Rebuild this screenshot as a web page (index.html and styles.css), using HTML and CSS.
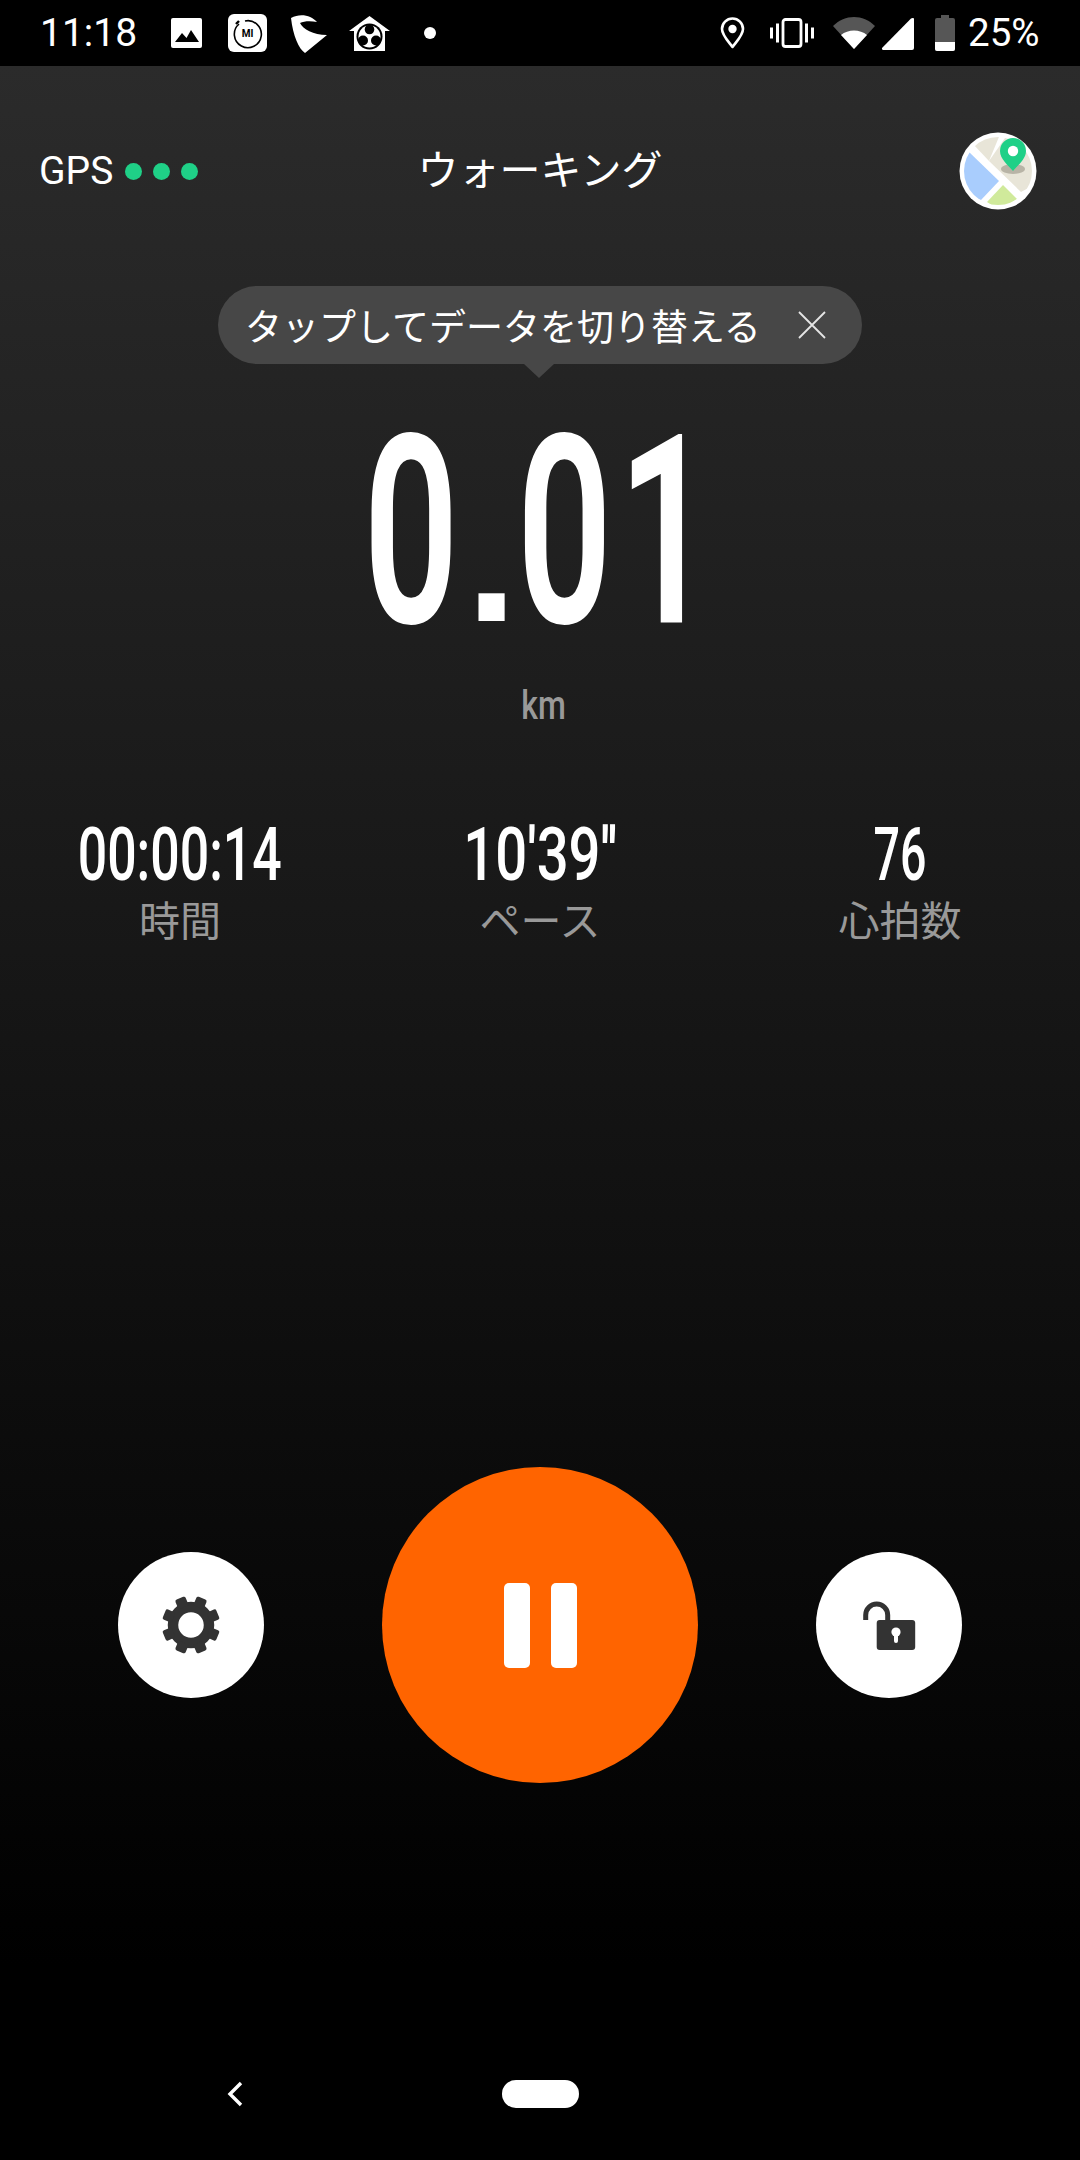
FILE: index.html
```html
<!DOCTYPE html>
<html lang="ja">
<head>
<meta charset="utf-8">
<title>ウォーキング</title>
<link rel="stylesheet" href="styles.css">
</head>
<body>
<div class="page">
  <div class="status">
    <div class="status-left">
      <span class="clock">11:18</span>
      <svg class="i-image" viewBox="0 0 31 30"><rect width="31" height="30" rx="2" fill="#fff"/><path d="M4 24 L11 15 L15.5 20 L20 12 L28 24 Z" fill="#000"/></svg>
      <svg class="i-mi" viewBox="0 0 39 38"><rect width="39" height="38" rx="6" fill="#fff"/><path d="M11 10 A13.5 13.5 0 1 0 17 7" fill="none" stroke="#000" stroke-width="1.6"/><path d="M8 10 L11 7" stroke="#000" stroke-width="2.4"/><text x="19.5" y="23" class="mi-text">MI</text></svg>
      <svg class="i-gs" viewBox="0 0 36 39"><path d="M0 4 C9 -1 20 1 26 8 C20 7 13 7 9 9 C12 15 22 21 36 21 L14 39 C8 35 2 22 0 4Z" fill="#fff"/></svg>
      <svg class="i-home" viewBox="0 0 41 35"><path d="M20.5 0 L41 15 L36 15 L36 35 L5 35 L5 15 L0 15Z" fill="#fff"/><circle cx="20.5" cy="20.5" r="13" fill="#000"/><circle cx="20.5" cy="20.5" r="11" fill="#fff"/><circle cx="20.5" cy="13.5" r="4.8" fill="#000"/><circle cx="14" cy="24.5" r="5" fill="#000"/><circle cx="27" cy="24.5" r="5" fill="#000"/></svg>
      <span class="dot"></span>
    </div>
    <div class="status-right">
      <svg class="i-loc" viewBox="0 0 25 32"><path d="M12.5 30 C8 24 2 18 2 12 A10.5 10.5 0 0 1 23 12 C23 18 17 24 12.5 30Z" fill="none" stroke="#fff" stroke-width="2.6" stroke-linejoin="round"/><circle cx="12.5" cy="12" r="4.2" fill="#fff"/></svg>
      <svg class="i-vib" viewBox="0 0 44 30"><rect x="13" y="1.5" width="18" height="27" rx="2.5" fill="none" stroke="#fff" stroke-width="2.8"/><path d="M1.5 9.5 V20.5 M7.5 5.5 V24.5 M36.5 5.5 V24.5 M42.5 9.5 V20.5" stroke="#fff" stroke-width="3"/></svg>
      <svg class="i-wifi" viewBox="0 0 42 32"><path d="M0 9 C12 -3 30 -3 42 9 L21 32Z" fill="#565656"/><path d="M8 18 C15 12 27 12 34 18 L21 32Z" fill="#fff"/></svg>
      <svg class="i-sig" viewBox="0 0 33 33"><path d="M33 2 V31 A2 2 0 0 1 31 33 H2 A1.5 1.5 0 0 1 1 31 L30 1.5 C31 0.6 33 0.6 33 2Z" fill="#fff"/></svg>
      <svg class="i-bat" viewBox="0 0 20 36"><path d="M6 0 H14 V3 H18 A2 2 0 0 1 20 5 V34 A2 2 0 0 1 18 36 H2 A2 2 0 0 1 0 34 V5 A2 2 0 0 1 2 3 H6Z" fill="#565656"/><path d="M0 27 H20 V34 A2 2 0 0 1 18 36 H2 A2 2 0 0 1 0 34Z" fill="#fff"/></svg>
      <span class="pct">25%</span>
    </div>
  </div>

  <main class="main">
    <header class="head">
      <div class="gps"><span>GPS</span><i></i><i></i><i></i></div>
      <div class="title">ウォーキング</div>
      <svg class="map" viewBox="0 0 78 78">
        <defs><clipPath id="mapclip"><circle cx="39" cy="39" r="34"/></clipPath></defs>
        <circle cx="39" cy="39" r="38.5" fill="#fff"/>
        <g clip-path="url(#mapclip)">
          <path d="M14 10 L42 -2 L30 27Z" fill="#e8e5d8" transform="translate(0 2)"/>
          <path d="M46 6 L80 10 L80 50 L62 60 L30 29Z" fill="#e8e5d8"/>
          <path d="M10 20 L40 49 L22 68 L0 60 L0 20Z" fill="#a9cdfd"/>
          <path d="M44 53 L58 67 L40 78 L28 70Z" fill="#d0ea9b"/>
        </g>
        <ellipse cx="54" cy="37" rx="12" ry="5" fill="#b8b4a6"/>
        <path d="M54 39 C49 33 41 27 41 19 A13 13 0 0 1 67 19 C67 27 59 33 54 39Z" fill="#1fd087"/>
        <circle cx="54" cy="19" r="5.2" fill="#fff"/>
      </svg>
    </header>

    <div class="tip-wrap">
      <div class="tip">
        <span class="tip-text">タップしてデータを切り替える</span>
        <svg class="tip-x" viewBox="0 0 28 28"><path d="M1 1 L27 27 M27 1 L1 27" stroke="#e6e6e6" stroke-width="1.8"/></svg>
      </div>
    </div>

    <div class="big"><span class="big-num">0<span class="big-dot">.</span>01</span></div>
    <div class="unit"><span class="unit-t">km</span></div>

    <section class="stats">
      <div class="stat"><span class="val v-time">00:00:14</span><span class="lab">時間</span></div>
      <div class="stat"><span class="val v-pace">10'39''</span><span class="lab">ペース</span></div>
      <div class="stat"><span class="val v-hr">76</span><span class="lab">心拍数</span></div>
    </section>

    <section class="controls">
      <button class="btn-s">
        <svg class="gear" viewBox="-30 -30 60 60">
          <circle r="18" fill="none" stroke="#333" stroke-width="10.5"/>
          <rect x="-5.5" y="-29" width="11" height="10" rx="2" fill="#333" transform="rotate(22.5)"/>
          <rect x="-5.5" y="-29" width="11" height="10" rx="2" fill="#333" transform="rotate(67.5)"/>
          <rect x="-5.5" y="-29" width="11" height="10" rx="2" fill="#333" transform="rotate(112.5)"/>
          <rect x="-5.5" y="-29" width="11" height="10" rx="2" fill="#333" transform="rotate(157.5)"/>
          <rect x="-5.5" y="-29" width="11" height="10" rx="2" fill="#333" transform="rotate(202.5)"/>
          <rect x="-5.5" y="-29" width="11" height="10" rx="2" fill="#333" transform="rotate(247.5)"/>
          <rect x="-5.5" y="-29" width="11" height="10" rx="2" fill="#333" transform="rotate(292.5)"/>
          <rect x="-5.5" y="-29" width="11" height="10" rx="2" fill="#333" transform="rotate(337.5)"/>
        </svg>
      </button>
      <button class="btn-p"><i></i><i></i></button>
      <button class="btn-s">
        <svg class="lock" viewBox="-30 -30 60 60">
          <path d="M-23.3 -5 V-10 a11 11 0 0 1 22 0 V-5" fill="none" stroke="#333" stroke-width="5"/>
          <rect x="-12.3" y="-5" width="38.5" height="30" rx="3" fill="#333"/>
          <circle cx="7" cy="7" r="4.6" fill="#fff"/>
          <rect x="5" y="7" width="4" height="11" rx="2" fill="#fff"/>
        </svg>
      </button>
    </section>

    <nav class="nav">
      <svg class="back" viewBox="0 0 18 28"><path d="M15 3 L4 14 L15 25" fill="none" stroke="#fff" stroke-width="3.4"/></svg>
      <span class="pill"></span>
    </nav>
  </main>
</div>
</body>
</html>
```

FILE: styles.css
```css
* { box-sizing: border-box; }
html, body { margin: 0; padding: 0; background: #000; }
.page {
  width: 1080px;
  height: 2160px;
  overflow: hidden;
  color: #fff;
  font-family: Roboto, "Noto Sans CJK JP", sans-serif;
}
.status {
  height: 66px;
  background: #000;
  display: flex;
  justify-content: space-between;
  align-items: center;
  padding: 0 40px 0 40px;
}
.status-left, .status-right { display: flex; align-items: center; }
.clock { font-size: 39px; width: 96px; white-space: nowrap; line-height: 66px; }
.i-image { width: 31px; height: 30px; margin-left: 35px; }
.i-mi { width: 39px; height: 38px; margin-left: 26px; }
.i-gs { width: 36px; height: 39px; margin-left: 24px; }
.i-home { width: 41px; height: 35px; margin-left: 22px; }
.dot { width: 12px; height: 12px; border-radius: 50%; background: #fff; margin-left: 34px; }
.mi-text { font: 700 10px Roboto, sans-serif; text-anchor: middle; fill: #000; }
.i-loc { width: 25px; height: 32px; }
.i-vib { width: 44px; height: 30px; margin-left: 25px; }
.i-wifi { width: 42px; height: 32px; margin-left: 19px; }
.i-sig { width: 33px; height: 33px; margin-left: 6px; }
.i-bat { width: 20px; height: 36px; margin-left: 21px; }
.pct { font-size: 38.5px; margin-left: 13px; width: 72px; white-space: nowrap; line-height: 66px; }

.main {
  height: 2094px;
  background: linear-gradient(180deg, #2b2b2b 0, #000 1900px);
  display: flex;
  flex-direction: column;
}
.head {
  display: flex;
  align-items: center;
  justify-content: space-between;
  height: 78px;
  margin-top: 66px;
  padding: 0 43px 0 39px;
  position: relative;
}
.gps { display: flex; align-items: center; font-size: 39px; }
.gps i { width: 17px; height: 17px; border-radius: 50%; background: #1fd087; margin-left: 11px; }
.gps span { margin-right: 1px; }
.title { font-size: 41px; line-height: 78px; position: absolute; left: 0; right: 0; text-align: center; }
.map { width: 78px; height: 78px; position: relative; }

.tip-wrap { display: flex; justify-content: center; margin-top: 76px; }
.tip {
  position: relative;
  width: 644px;
  height: 78px;
  border-radius: 39px;
  background: #474747;
  display: flex;
  align-items: center;
  justify-content: space-between;
  padding: 0 36px 0 27px;
}
.tip::after {
  content: "";
  position: absolute;
  left: 306px;
  top: 78px;
  width: 0;
  height: 0;
  border-left: 15.5px solid transparent;
  border-right: 15.5px solid transparent;
  border-top: 14px solid #474747;
}
.tip-text { font-size: 37px; white-space: nowrap; }
.tip-x { width: 28px; height: 28px; }

.big { height: 270px; margin-top: 33px; padding-left: 5px; display: flex; justify-content: center; align-items: center; }
.big-num {
  display: inline-block;
  font-family: Roboto, sans-serif;
  font-weight: 500;
  font-size: 260px;
  line-height: 270px;
  letter-spacing: 12px;
  white-space: nowrap;
  -webkit-text-stroke: 3px #fff;
  transform: scaleX(0.636);
}
.big-dot {
  display: inline-block;
  font-family: "Liberation Sans", sans-serif;
  font-weight: 700;
  font-size: 185px;
  letter-spacing: 0;
  line-height: 100px;
  margin: 0 15px;
  -webkit-text-stroke: 0;
  transform: scaleX(1.57);
}
.unit { display: flex; justify-content: center; height: 50px; margin-top: 13px; padding-left: 8px; }
.unit-t { display: inline-block; font-size: 41px; font-weight: 500; line-height: 50px; color: #999; transform: scaleX(0.78); }

.stats { display: grid; grid-template-columns: repeat(3, 1fr); margin-top: 88px; }
.stat { display: flex; flex-direction: column; align-items: center; }
.val {
  display: inline-block;
  font-weight: 500;
  font-size: 74px;
  line-height: 74px;
  white-space: nowrap;
}
.v-time { transform: scaleX(0.7); }
.v-pace { transform: scaleX(0.76); }
.v-hr { transform: scaleX(0.63); }
.lab { font-size: 41px; line-height: 58px; color: #999; margin-top: 1px; }

.controls {
  display: flex;
  align-items: center;
  justify-content: center;
  height: 316px;
  margin-top: 516px;
}
.btn-s {
  width: 146px;
  height: 146px;
  border: 0;
  padding: 0;
  border-radius: 50%;
  background: #fff;
  display: flex;
  align-items: center;
  justify-content: center;
}
.gear, .lock { width: 60px; height: 60px; }
.btn-p {
  width: 316px;
  height: 316px;
  margin: 0 118px 0 118px;
  border: 0;
  padding: 0;
  border-radius: 50%;
  background: #ff6400;
  display: flex;
  align-items: center;
  justify-content: center;
  gap: 21px;
}
.btn-p i { width: 26px; height: 85px; border-radius: 5px; background: #fff; }

.nav { display: flex; align-items: center; height: 28px; margin-top: 297px; padding-left: 226px; }
.back { width: 18px; height: 28px; }
.pill { width: 77px; height: 28px; border-radius: 14px; background: #fff; margin-left: 258px; }
```
